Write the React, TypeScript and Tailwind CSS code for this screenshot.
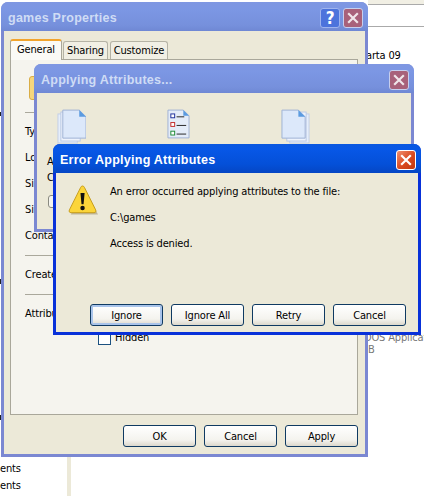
import type { ReactNode } from 'react';

const ui = 'font-["DejaVu_Sans_Condensed","Roboto",sans-serif]';

function CloseGlyph() {
  return (
    <svg viewBox="0 0 20 20" className="w-full h-full">
      <path d="M5.5 5.5 14.5 14.5M14.5 5.5 5.5 14.5" stroke="currentColor" strokeWidth={2.4} strokeLinecap="square" />
    </svg>
  );
}

function XpButton({ label, focused }: { label: string; focused?: boolean }) {
  return (
    <button
      className={`w-[73px] h-[22px] rounded-[3px] border border-[#0f3a62] leading-none text-black bg-[linear-gradient(180deg,#ffffff,#f4f3ee_70%,#dcd8cc)] ${
        focused ? 'shadow-[inset_0_0_0_2px_#a9c4ea]' : ''
      }`}
    >
      {label}
    </button>
  );
}

function PagesIcon({ flip }: { flip?: boolean }) {
  return (
    <svg width="29" height="37" viewBox="0 0 30 38">
      <g transform={flip ? 'translate(30,0) scale(-1,1)' : undefined}>
        <rect x="1" y="5" width="20" height="30" fill="#e6eefa" stroke="#c3cfe6" />
        <rect x="4" y="3" width="20" height="30" fill="#eef3fc" stroke="#b9c8e4" />
      </g>
      {flip ? (
        <>
          <path d="M1 1h17l7 7v22H1z" fill="#dce8fa" stroke="#9fb1d3" />
          <path d="M18 1l7 7h-7z" fill="#5b9be0" />
        </>
      ) : (
        <>
          <path d="M6 1h17l7 7v22H6z" fill="#dce8fa" stroke="#9fb1d3" />
          <path d="M23 1l7 7h-7z" fill="#5b9be0" />
        </>
      )}
    </svg>
  );
}

function ChecklistIcon() {
  return (
    <svg width="23" height="30" viewBox="0 0 24 31">
      <path d="M1 1h16l6 6v23H1z" fill="#e4ecf8" stroke="#9fb1d3" />
      <path d="M17 1l6 6h-6z" fill="#5b9be0" />
      <rect x="4" y="5" width="4" height="4" fill="#fff" stroke="#1d2f9a" />
      <rect x="4" y="14" width="4" height="4" fill="#fff" stroke="#c22a2a" />
      <rect x="4" y="23" width="4" height="4" fill="#fff" stroke="#1d8a35" />
      <path d="M10 8h8M10 17h10M10 26h10" stroke="#222" />
    </svg>
  );
}

function WarningIcon() {
  return (
    <svg width="30" height="33" viewBox="0 0 32 34">
      <path d="M16 2 31 30H2z" fill="#8a7a50" opacity="0.45" transform="translate(1,2)" />
      <path d="M15.5 1.5c1 0 1.5.6 2 1.5l12 24c.8 1.7 0 3-1.7 3H3.2c-1.7 0-2.5-1.3-1.7-3l12-24c.5-.9 1-1.5 2-1.5z" fill="#fbd53a" stroke="#c49a16" />
      <path d="M13.3 9h4.4l-1.1 12h-2.2z" fill="#111" />
      <circle cx="15.5" cy="25" r="2.4" fill="#111" />
    </svg>
  );
}

function TitleBar({
  title,
  active,
  children,
}: {
  title: string;
  active?: boolean;
  children: ReactNode;
}) {
  return (
    <div
      className={`h-[29px] shrink-0 flex items-center justify-between pt-[3px] pl-[7px] pr-[5px] rounded-t-[7px] ${
        active
          ? 'bg-[linear-gradient(180deg,#0a58e0,#0757e6_20%,#0450d8_70%,#0546c4)]'
          : 'bg-[linear-gradient(180deg,#7f97e2,#7c97e4_25%,#7690dc_80%,#6f88d4)]'
      }`}
    >
      <span
        className={`font-['Liberation_Sans',sans-serif] font-bold text-[12.5px] tracking-[0.25px] ${
          active ? 'text-white' : 'text-[#cfdcf5]'
        }`}
      >
        {title}
      </span>
      <div className="flex gap-[3px]">{children}</div>
    </div>
  );
}

function CloseButton({ active }: { active?: boolean }) {
  return (
    <div
      className={`w-[20px] h-[20px] rounded-[3px] border ${
        active
          ? 'border-white bg-[linear-gradient(135deg,#f09070,#d9481f_55%,#c2380e)] text-white'
          : 'border-[#c6cfee] bg-[#a8617a] text-[#f0e6ea]'
      }`}
    >
      <CloseGlyph />
    </div>
  );
}

function PropertiesWindow() {
  const labels = ['Ty', 'Lo', 'Si', 'Si', 'Conta'];
  return (
    <div className="absolute left-[1px] top-[2px] w-[367px] h-[455px] flex flex-col rounded-t-[7px] bg-[#7b88d2] px-[3px] pb-[3px]">
      <div className="-mx-[3px]">
        <TitleBar title="games Properties">
          <div className="w-[20px] h-[20px] rounded-[3px] border border-[#9fb4ee] bg-[#4c73dc] text-white text-[17px] leading-[18px] font-bold text-center">?</div>
          <CloseButton />
        </TitleBar>
      </div>
      <div className="flex-1 flex flex-col bg-[#ece9d8] pl-[6px] pr-[7px]">
        <div className="flex items-end h-[28px] gap-[1px] text-black">
          <div className="w-[52px] h-[21px] -mb-[1px] z-10 bg-[#fbfaf6] border border-[#a9a79a] border-b-0 border-t-[2px] border-t-[#f2a42c] rounded-t-[3px] text-center leading-[18px]">General</div>
          <div className="w-[45px] h-[18px] bg-[#f1efe4] border border-[#b5b3a5] border-b-0 rounded-t-[3px] text-center leading-[17px]">Sharing</div>
          <div className="w-[58px] h-[18px] ml-[1px] bg-[#f1efe4] border border-[#b5b3a5] border-b-0 rounded-t-[3px] text-center leading-[17px]">Customize</div>
        </div>
        <div className="h-[356px] bg-[#f5f4ee] border border-[#a9a79a] pl-[14px] text-black">
          <div className="ml-[4px] w-[24px] h-[24px] mt-[16px] rounded-[3px] bg-[#f6d67c] border border-[#d9ad46]" />
          <div className="mt-[12px] h-px bg-[#aaa89c] w-[20px]" />
          <div className="mt-[11px] flex flex-col gap-[10px]">
            {labels.map((text, i) => (
              <span key={i} className="h-[16px] leading-[16px]">{text}</span>
            ))}
          </div>
          <div className="mt-[11px] h-px bg-[#aaa89c] w-[40px]" />
          <div className="mt-[11px] leading-[16px]">Create</div>
          <div className="mt-[11px] h-px bg-[#aaa89c] w-[40px]" />
          <div className="mt-[11px] leading-[16px]">Attribu</div>
          <div className="mt-[10px] ml-[73px] flex items-center gap-[4px] h-[13px]">
            <div className="w-[13px] h-[13px] border border-[#1c5180] bg-white" />
            <span>Hidden</span>
          </div>
        </div>
        <div className="flex justify-end gap-[8px] mt-[10px]">
          <XpButton label="OK" />
          <XpButton label="Cancel" />
          <XpButton label="Apply" />
        </div>
      </div>
    </div>
  );
}

function ApplyingWindow() {
  return (
    <div className="absolute left-[34px] top-[64px] w-[380px] h-[168px] flex flex-col rounded-t-[7px] bg-[#7b88d2] px-[3px] pb-[3px]">
      <div className="-mx-[3px]">
        <TitleBar title="Applying Attributes...">
          <CloseButton />
        </TitleBar>
      </div>
      <div className="flex-1 bg-[#ece9d8] text-black">
        <div className="flex pt-[16px] pl-[20px]">
          <PagesIcon />
          <div className="ml-[81px]">
            <ChecklistIcon />
          </div>
          <div className="ml-[91px]">
            <PagesIcon flip />
          </div>
        </div>
        <div className="pl-[10px] mt-[8px] leading-[16px]">A</div>
        <div className="pl-[10px] leading-[16px]">C</div>
        <div className="ml-[11px] mt-[9px] w-[12px] h-[13px] rounded-[3px] border border-[#8a8a80] bg-[#f6f5ef]" />
      </div>
    </div>
  );
}

function ErrorDialog() {
  return (
    <div className="absolute left-[53px] top-[144px] w-[368px] h-[191px] flex flex-col rounded-t-[7px] bg-[#0831d9] px-[3px] pb-[3px]">
      <div className="-mx-[3px]">
        <TitleBar title="Error Applying Attributes" active>
          <CloseButton active />
        </TitleBar>
      </div>
      <div className="flex-1 flex flex-col bg-[#ece9d8] px-[12px] text-black">
        <div className="flex flex-1 pt-[11px]">
          <div className="shrink-0 w-[42px]">
            <WarningIcon />
          </div>
          <div className="flex flex-col gap-[10px] leading-[16px]">
            <span>An error occurred applying attributes to the file:</span>
            <span>C:\games</span>
            <span>Access is denied.</span>
          </div>
        </div>
        <div className="flex justify-end gap-[8px] mb-[6px]">
          <XpButton label="Ignore" focused />
          <XpButton label="Ignore All" />
          <XpButton label="Retry" />
          <XpButton label="Cancel" />
        </div>
      </div>
    </div>
  );
}

export default function App() {
  return (
    <div className={`relative w-[424px] h-[496px] overflow-hidden bg-white text-[11px] tracking-[-0.15px] ${ui}`}>
      {/* desktop left behind the dialogs */}
      <div className="absolute left-[368px] right-0 top-0 h-[5px] bg-[#f1efe4] border-b border-[#aaa]" />
      <div className="absolute left-[368px] right-0 top-[26px] h-px bg-[#aaa]" />
      <span className="absolute left-[366px] top-[48px] leading-[16px] whitespace-nowrap text-black">arta 09</span>
      <span className="absolute left-[364px] top-[332px] leading-[12px] whitespace-nowrap text-[#777]">DOS Applicat</span>
      <span className="absolute left-[368px] top-[344px] leading-[12px] text-[#777]">B</span>
      <span className="absolute left-0 top-[461px] leading-[16px] text-black">ents</span>
      <span className="absolute left-0 top-[478px] leading-[16px] text-black">ents</span>
      <div className="absolute left-[67px] top-[457px] w-[4px] h-[39px] bg-[#ece9d8]" />
      <div className="absolute left-0 top-[112px] w-px h-[4px] bg-[#222]" />
      <div className="absolute left-0 top-[279px] w-px h-[5px] bg-[#222]" />
      <div className="absolute left-0 top-[415px] w-px h-[5px] bg-[#222]" />

      <PropertiesWindow />
      <ApplyingWindow />
      <ErrorDialog />
    </div>
  );
}
